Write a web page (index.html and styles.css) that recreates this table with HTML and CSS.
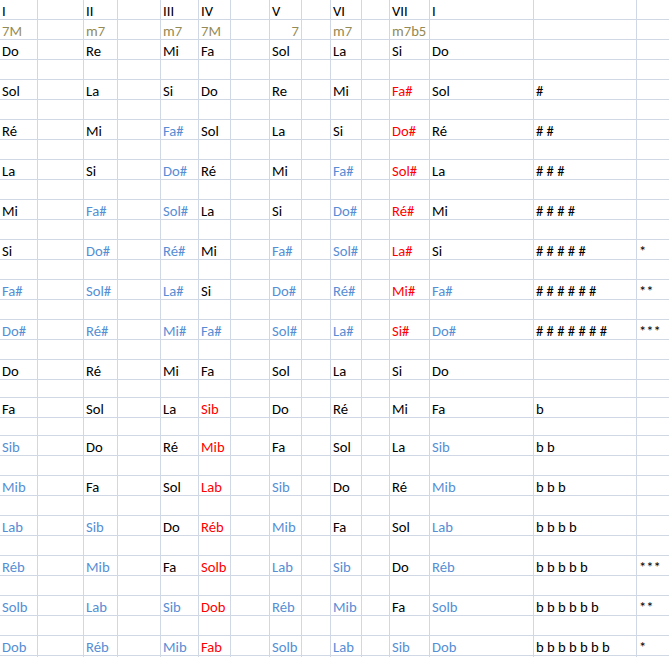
FILE: index.html
```html
<!DOCTYPE html>
<html>
<head>
<meta charset="utf-8">
<link rel="stylesheet" href="styles.css">
</head>
<body>
<div class="sheet">
<span>I</span><span></span><span>II</span><span></span><span>III</span><span>IV</span><span></span><span>V</span><span></span><span>VI</span><span></span><span>VII</span><span>I</span><span></span><span></span>
<span class="o">7M</span><span></span><span class="o">m7</span><span></span><span class="o">m7</span><span class="o">7M</span><span></span><span class="o num">7</span><span></span><span class="o">m7</span><span></span><span class="o">m7b5</span><span></span><span></span><span></span>
<span>Do</span><span></span><span>Re</span><span></span><span>Mi</span><span>Fa</span><span></span><span>Sol</span><span></span><span>La</span><span></span><span>Si</span><span>Do</span><span></span><span></span>
<span></span><span></span><span></span><span></span><span></span><span></span><span></span><span></span><span></span><span></span><span></span><span></span><span></span><span></span><span></span>
<span>Sol</span><span></span><span>La</span><span></span><span>Si</span><span>Do</span><span></span><span>Re</span><span></span><span>Mi</span><span></span><span class="r">Fa#</span><span>Sol</span><span>#</span><span></span>
<span></span><span></span><span></span><span></span><span></span><span></span><span></span><span></span><span></span><span></span><span></span><span></span><span></span><span></span><span></span>
<span>Ré</span><span></span><span>Mi</span><span></span><span class="b">Fa#</span><span>Sol</span><span></span><span>La</span><span></span><span>Si</span><span></span><span class="r">Do#</span><span>Ré</span><span># #</span><span></span>
<span></span><span></span><span></span><span></span><span></span><span></span><span></span><span></span><span></span><span></span><span></span><span></span><span></span><span></span><span></span>
<span>La</span><span></span><span>Si</span><span></span><span class="b">Do#</span><span>Ré</span><span></span><span>Mi</span><span></span><span class="b">Fa#</span><span></span><span class="r">Sol#</span><span>La</span><span># # #</span><span></span>
<span></span><span></span><span></span><span></span><span></span><span></span><span></span><span></span><span></span><span></span><span></span><span></span><span></span><span></span><span></span>
<span>Mi</span><span></span><span class="b">Fa#</span><span></span><span class="b">Sol#</span><span>La</span><span></span><span>Si</span><span></span><span class="b">Do#</span><span></span><span class="r">Ré#</span><span>Mi</span><span># # # #</span><span></span>
<span></span><span></span><span></span><span></span><span></span><span></span><span></span><span></span><span></span><span></span><span></span><span></span><span></span><span></span><span></span>
<span>Si</span><span></span><span class="b">Do#</span><span></span><span class="b">Ré#</span><span>Mi</span><span></span><span class="b">Fa#</span><span></span><span class="b">Sol#</span><span></span><span class="r">La#</span><span>Si</span><span># # # # #</span><span>*</span>
<span></span><span></span><span></span><span></span><span></span><span></span><span></span><span></span><span></span><span></span><span></span><span></span><span></span><span></span><span></span>
<span class="b">Fa#</span><span></span><span class="b">Sol#</span><span></span><span class="b">La#</span><span>Si</span><span></span><span class="b">Do#</span><span></span><span class="b">Ré#</span><span></span><span class="r">Mi#</span><span class="b">Fa#</span><span># # # # # #</span><span>**</span>
<span></span><span></span><span></span><span></span><span></span><span></span><span></span><span></span><span></span><span></span><span></span><span></span><span></span><span></span><span></span>
<span class="b">Do#</span><span></span><span class="b">Ré#</span><span></span><span class="b">Mi#</span><span class="b">Fa#</span><span></span><span class="b">Sol#</span><span></span><span class="b">La#</span><span></span><span class="r">Si#</span><span class="b">Do#</span><span># # # # # # #</span><span>***</span>
<span></span><span></span><span></span><span></span><span></span><span></span><span></span><span></span><span></span><span></span><span></span><span></span><span></span><span></span><span></span>
<span>Do</span><span></span><span>Ré</span><span></span><span>Mi</span><span>Fa</span><span></span><span>Sol</span><span></span><span>La</span><span></span><span>Si</span><span>Do</span><span></span><span></span>
<span></span><span></span><span></span><span></span><span></span><span></span><span></span><span></span><span></span><span></span><span></span><span></span><span></span><span></span><span></span>
<span>Fa</span><span></span><span>Sol</span><span></span><span>La</span><span class="r">Sib</span><span></span><span>Do</span><span></span><span>Ré</span><span></span><span>Mi</span><span>Fa</span><span>b</span><span></span>
<span></span><span></span><span></span><span></span><span></span><span></span><span></span><span></span><span></span><span></span><span></span><span></span><span></span><span></span><span></span>
<span class="b">Sib</span><span></span><span>Do</span><span></span><span>Ré</span><span class="r">Mib</span><span></span><span>Fa</span><span></span><span>Sol</span><span></span><span>La</span><span class="b">Sib</span><span>b b</span><span></span>
<span></span><span></span><span></span><span></span><span></span><span></span><span></span><span></span><span></span><span></span><span></span><span></span><span></span><span></span><span></span>
<span class="b">Mib</span><span></span><span>Fa</span><span></span><span>Sol</span><span class="r">Lab</span><span></span><span class="b">Sib</span><span></span><span>Do</span><span></span><span>Ré</span><span class="b">Mib</span><span>b b b</span><span></span>
<span></span><span></span><span></span><span></span><span></span><span></span><span></span><span></span><span></span><span></span><span></span><span></span><span></span><span></span><span></span>
<span class="b">Lab</span><span></span><span class="b">Sib</span><span></span><span>Do</span><span class="r">Réb</span><span></span><span class="b">Mib</span><span></span><span>Fa</span><span></span><span>Sol</span><span class="b">Lab</span><span>b b b b</span><span></span>
<span></span><span></span><span></span><span></span><span></span><span></span><span></span><span></span><span></span><span></span><span></span><span></span><span></span><span></span><span></span>
<span class="b">Réb</span><span></span><span class="b">Mib</span><span></span><span>Fa</span><span class="r">Solb</span><span></span><span class="b">Lab</span><span></span><span class="b">Sib</span><span></span><span>Do</span><span class="b">Réb</span><span>b b b b b</span><span>***</span>
<span></span><span></span><span></span><span></span><span></span><span></span><span></span><span></span><span></span><span></span><span></span><span></span><span></span><span></span><span></span>
<span class="b">Solb</span><span></span><span class="b">Lab</span><span></span><span class="b">Sib</span><span class="r">Dob</span><span></span><span class="b">Réb</span><span></span><span class="b">Mib</span><span></span><span>Fa</span><span class="b">Solb</span><span>b b b b b b</span><span>**</span>
<span></span><span></span><span></span><span></span><span></span><span></span><span></span><span></span><span></span><span></span><span></span><span></span><span></span><span></span><span></span>
<span class="b">Dob</span><span></span><span class="b">Réb</span><span></span><span class="b">Mib</span><span class="r">Fab</span><span></span><span class="b">Solb</span><span></span><span class="b">Lab</span><span></span><span class="b">Sib</span><span class="b">Dob</span><span>b b b b b b b</span><span>*</span>
<span></span><span></span><span></span><span></span><span></span><span></span><span></span><span></span><span></span><span></span><span></span><span></span><span></span><span></span><span></span>
</div>
</body>
</html>
```

FILE: styles.css
```css
html, body {
  margin: 0;
  padding: 0;
  background: #ffffff;
}

.sheet {
  display: grid;
  grid-template-columns: 38px 46px 34px 43px 38px 32px 39px 32px 29px 31px 28px 40px 104px 103px 64px;
  grid-template-rows: repeat(19, 20px) 18px 20px 18px;
  grid-auto-rows: 20px;
  font-family: Carlito, Lato, "Liberation Sans", sans-serif;
  font-size: 14.67px;
  color: #000000;
}

.sheet > span {
  box-sizing: border-box;
  border-right: 1px solid #d0d7e5;
  border-bottom: 1px solid #d0d7e5;
  padding: 3px 0 0 2px;
  line-height: 16px;
  white-space: nowrap;
  overflow: visible;
}

.sheet > .b { color: #558ed5; }
.sheet > .r { color: #ff0000; }
.sheet > .o { color: #948a54; }
.sheet > .num { text-align: right; padding-right: 2px; }
```
